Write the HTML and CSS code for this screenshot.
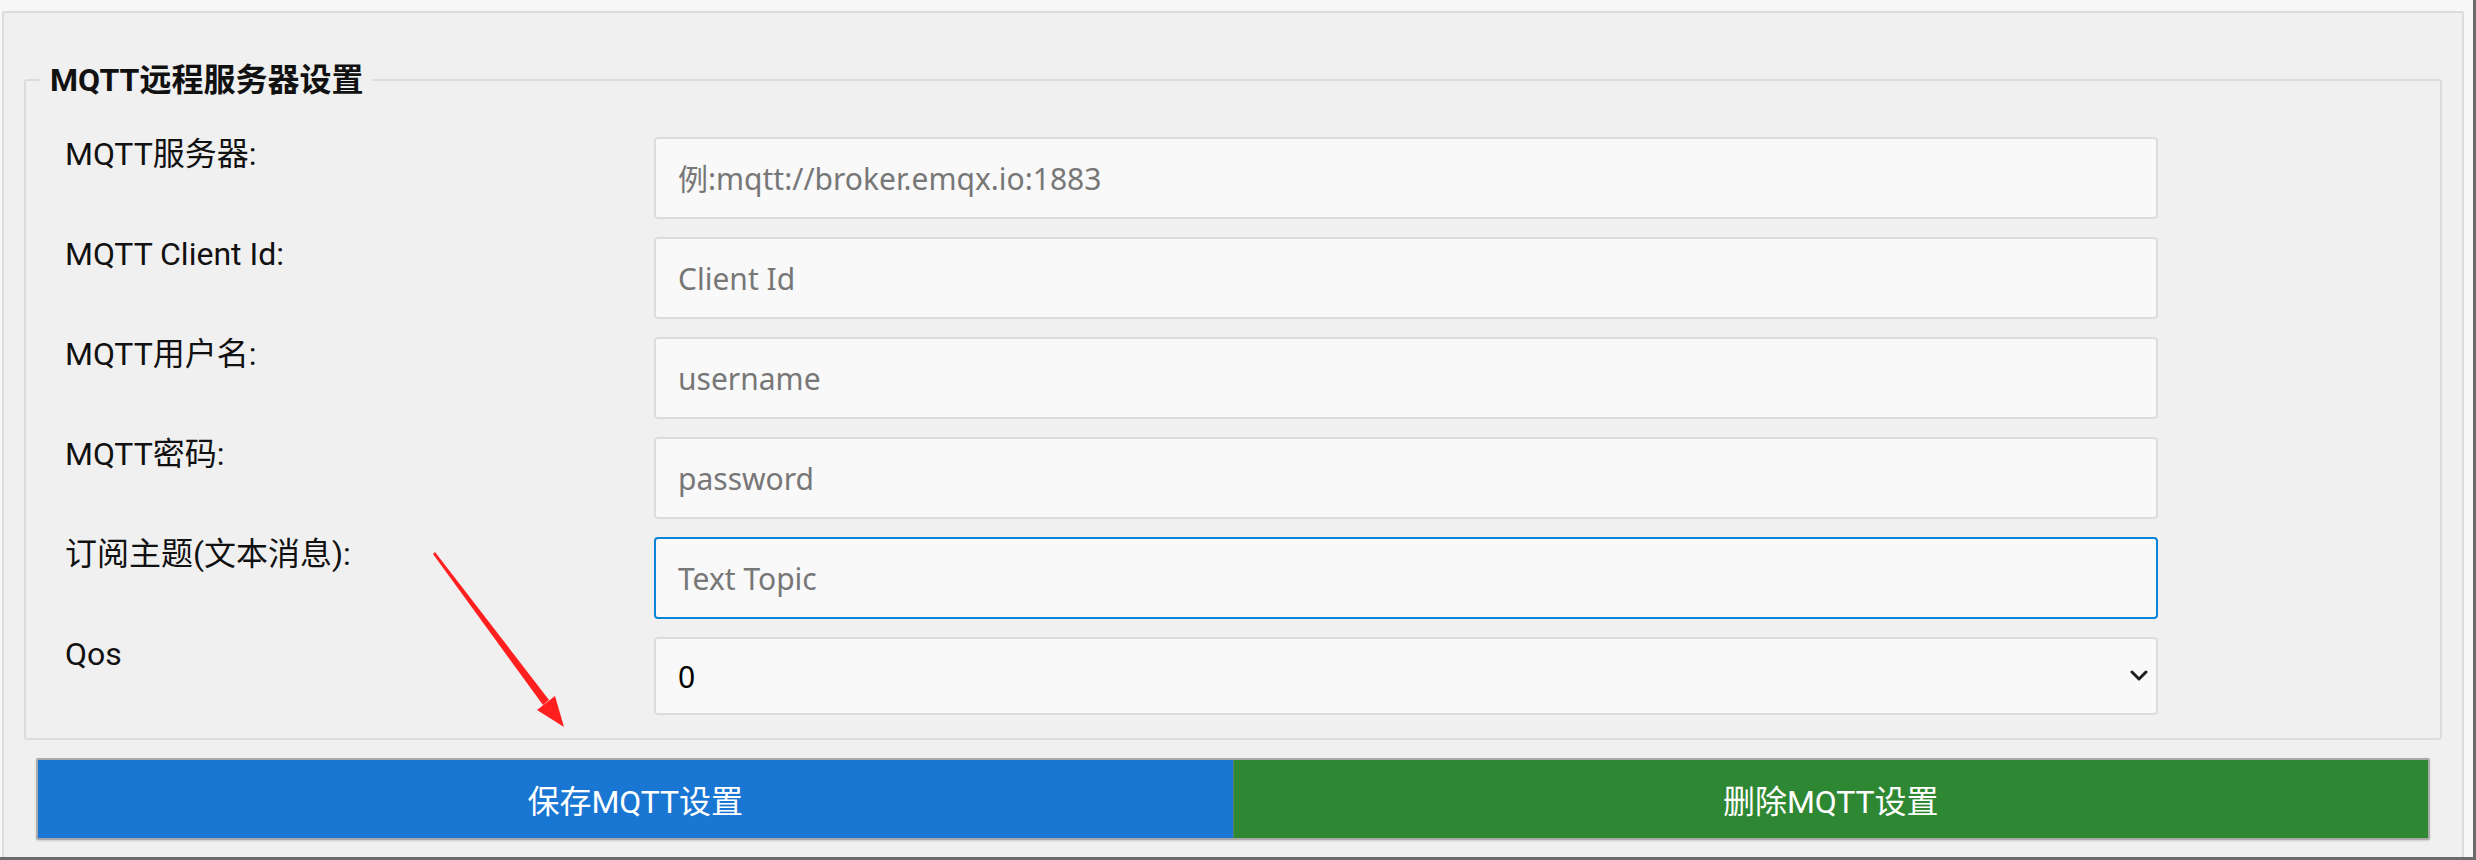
FILE: index.html
```html
<!DOCTYPE html>
<html lang="zh-CN">
<head>
<meta charset="utf-8">
<title>MQTT远程服务器设置</title>
<link rel="stylesheet" href="styles.css">
</head>
<body>
<div class="frame">
  <div class="panel">
    <fieldset class="group">
      <legend class="group-title">MQTT远程服务器设置</legend>
      <div class="form-grid">
        <label class="field-label">MQTT服务器:</label>
        <input class="field-input" type="text" placeholder="例:mqtt://broker.emqx.io:1883">

        <label class="field-label">MQTT Client Id:</label>
        <input class="field-input" type="text" placeholder="Client Id">

        <label class="field-label">MQTT用户名:</label>
        <input class="field-input" type="text" placeholder="username">

        <label class="field-label">MQTT密码:</label>
        <input class="field-input" type="password" placeholder="password">

        <label class="field-label">订阅主题(文本消息):</label>
        <input class="field-input is-focused" type="text" placeholder="Text Topic">

        <label class="field-label">Qos</label>
        <div class="select-wrap">
          <select class="field-select">
            <option>0</option>
            <option>1</option>
            <option>2</option>
          </select>
          <svg class="select-arrow" width="18" height="12" viewBox="0 0 18 12" aria-hidden="true">
            <path d="M2 2 L9 9 L16 2" fill="none" stroke="#1e1e1e" stroke-width="3" stroke-linecap="round" stroke-linejoin="round"/>
          </svg>
        </div>
      </div>
    </fieldset>

    <div class="actions">
      <button class="btn btn-save" type="button">保存MQTT设置</button>
      <button class="btn btn-delete" type="button">删除MQTT设置</button>
    </div>
  </div>

  <svg class="annotation" width="2476" height="860" viewBox="0 0 2476 860" aria-hidden="true">
    <polygon points="433,554 435,552 549,700 543,705" fill="#ff1f1f"/>
    <polygon points="564,727 537,710 555,696" fill="#ff1f1f"/>
  </svg>
</div>
</body>
</html>
```

FILE: styles.css
```css
* {
  box-sizing: border-box;
}

html, body {
  margin: 0;
  padding: 0;
  background: #f7f7f7;
}

body {
  font-family: "Noto Sans", "Noto Sans CJK SC", sans-serif;
  color: #000;
}

.frame {
  position: relative;
  width: 2476px;
  height: 860px;
  padding: 11px 9px 0 2px;
  border-right: 3px solid #6b6b6b;
  border-bottom: 3px solid #6b6b6b;
  overflow: hidden;
}

.panel {
  width: 2462px;
  height: 900px;
  background: #f0f0f0;
  border: 2px solid #dcdcdc;
  border-radius: 2px;
  padding-top: 47px;
}

.group {
  margin: 0 20px;
  padding: 0;
  border: 2px solid #dcdcdc;
  border-radius: 3px;
  min-width: 0;
}

.group-title {
  margin-left: 14px;
  padding: 0 10px;
  font-family: "Roboto", "Noto Sans CJK SC", sans-serif;
  font-size: 32px;
  font-weight: 700;
  line-height: 40px;
  color: #111;
}

.form-grid {
  display: grid;
  grid-template-columns: 589px 1504px;
  row-gap: 18px;
  padding: 37px 0 23px 39px;
}

.field-label {
  font-family: "Roboto", "Noto Sans CJK SC", sans-serif;
  font-size: 32px;
  line-height: 34px;
  color: #111;
}

.field-input,
.field-select {
  width: 100%;
  height: 82px;
  margin: 0;
  padding: 0 22px;
  font-family: "Noto Sans", "Noto Sans CJK SC", sans-serif;
  font-size: 30px;
  color: #000;
  background: #f9f9f9;
  border: 2px solid #dcdcdc;
  border-radius: 4px;
  outline: none;
}

.field-input::placeholder {
  color: #777;
  opacity: 1;
}

.field-input.is-focused {
  border-color: #0a84d8;
}

.select-wrap {
  position: relative;
}

.field-select {
  height: 78px;
  -webkit-appearance: none;
  appearance: none;
}

.select-arrow {
  position: absolute;
  right: 10px;
  top: 33px;
  pointer-events: none;
}

.actions {
  display: flex;
  margin: 18px 32px 0;
  height: 82px;
  border: 2px solid #a9a9a9;
  border-radius: 2px;
  box-shadow: 0 1px 2px rgba(0, 0, 0, 0.15);
}

.btn {
  flex: 1;
  margin: 0;
  padding: 0;
  border: none;
  font-family: "Roboto", "Noto Sans CJK SC", sans-serif;
  font-size: 32px;
  color: #fff;
  cursor: pointer;
}

.btn-save {
  background: #1976d2;
  border-right: 1px solid #5e7f6a;
}

.btn-delete {
  background: #2e8732;
}

.annotation {
  position: absolute;
  left: 0;
  top: 0;
  pointer-events: none;
}
```
